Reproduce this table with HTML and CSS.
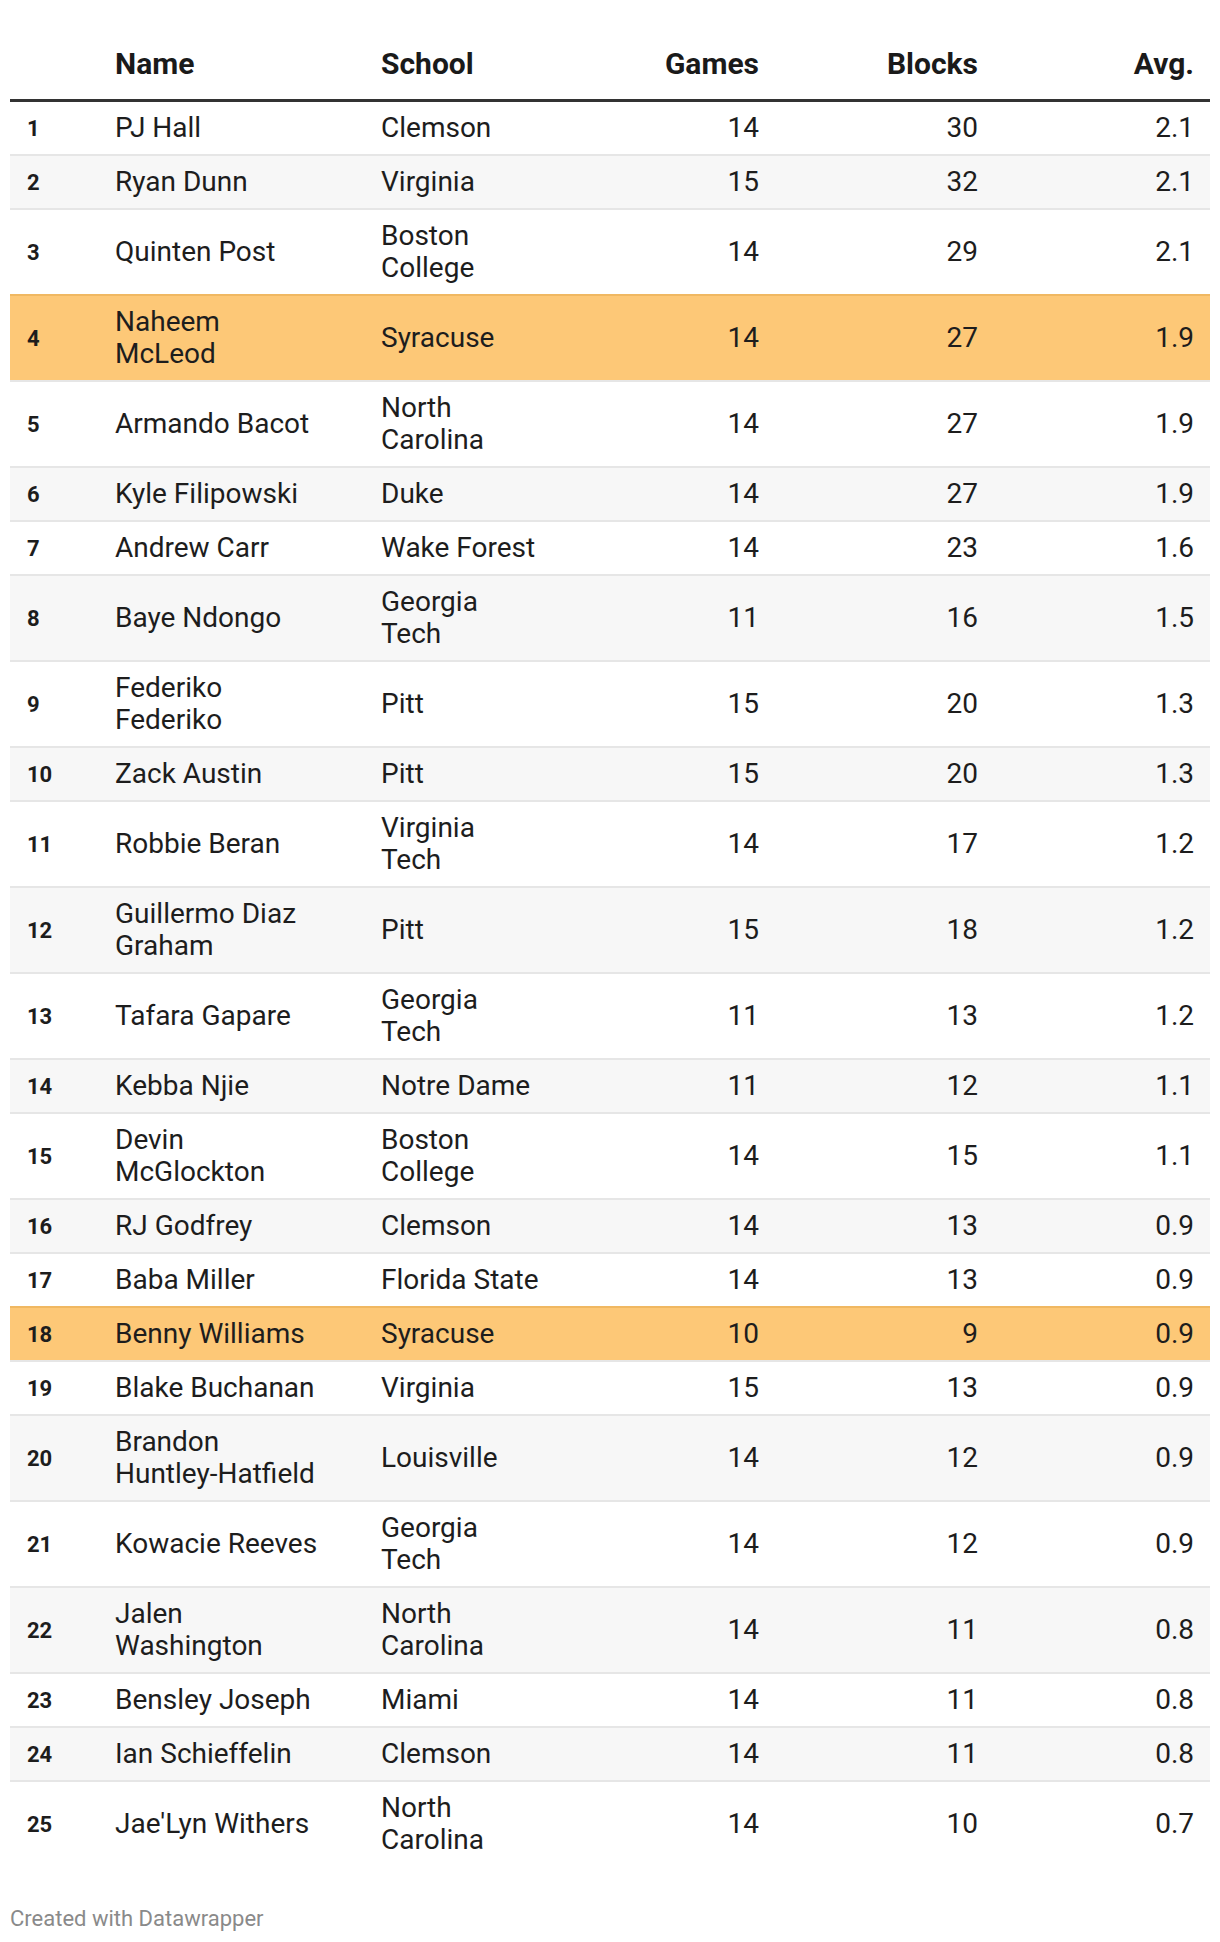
FILE: index.html
```html
<!DOCTYPE html>
<html lang="en">
<head>
<meta charset="utf-8">
<title>ACC Blocks Leaders</title>
<link rel="stylesheet" href="styles.css">
</head>
<body>
<div class="chart">
  <table class="stats">
    <colgroup>
      <col class="c-rank"><col class="c-name"><col class="c-school"><col class="c-games"><col class="c-blocks"><col class="c-avg">
    </colgroup>
    <thead>
      <tr>
        <th class="rank"></th>
        <th>Name</th>
        <th>School</th>
        <th class="num">Games</th>
        <th class="num">Blocks</th>
        <th class="num">Avg.</th>
      </tr>
    </thead>
    <tbody>
      <tr><td class="rank">1</td><td>PJ Hall</td><td>Clemson</td><td class="num">14</td><td class="num">30</td><td class="num">2.1</td></tr>
      <tr><td class="rank">2</td><td>Ryan Dunn</td><td>Virginia</td><td class="num">15</td><td class="num">32</td><td class="num">2.1</td></tr>
      <tr><td class="rank">3</td><td>Quinten Post</td><td>Boston<br>College</td><td class="num">14</td><td class="num">29</td><td class="num">2.1</td></tr>
      <tr class="hl"><td class="rank">4</td><td>Naheem<br>McLeod</td><td>Syracuse</td><td class="num">14</td><td class="num">27</td><td class="num">1.9</td></tr>
      <tr><td class="rank">5</td><td>Armando Bacot</td><td>North<br>Carolina</td><td class="num">14</td><td class="num">27</td><td class="num">1.9</td></tr>
      <tr><td class="rank">6</td><td>Kyle Filipowski</td><td>Duke</td><td class="num">14</td><td class="num">27</td><td class="num">1.9</td></tr>
      <tr><td class="rank">7</td><td>Andrew Carr</td><td>Wake Forest</td><td class="num">14</td><td class="num">23</td><td class="num">1.6</td></tr>
      <tr><td class="rank">8</td><td>Baye Ndongo</td><td>Georgia<br>Tech</td><td class="num">11</td><td class="num">16</td><td class="num">1.5</td></tr>
      <tr><td class="rank">9</td><td>Federiko<br>Federiko</td><td>Pitt</td><td class="num">15</td><td class="num">20</td><td class="num">1.3</td></tr>
      <tr><td class="rank">10</td><td>Zack Austin</td><td>Pitt</td><td class="num">15</td><td class="num">20</td><td class="num">1.3</td></tr>
      <tr><td class="rank">11</td><td>Robbie Beran</td><td>Virginia<br>Tech</td><td class="num">14</td><td class="num">17</td><td class="num">1.2</td></tr>
      <tr><td class="rank">12</td><td>Guillermo Diaz<br>Graham</td><td>Pitt</td><td class="num">15</td><td class="num">18</td><td class="num">1.2</td></tr>
      <tr><td class="rank">13</td><td>Tafara Gapare</td><td>Georgia<br>Tech</td><td class="num">11</td><td class="num">13</td><td class="num">1.2</td></tr>
      <tr><td class="rank">14</td><td>Kebba Njie</td><td>Notre Dame</td><td class="num">11</td><td class="num">12</td><td class="num">1.1</td></tr>
      <tr><td class="rank">15</td><td>Devin<br>McGlockton</td><td>Boston<br>College</td><td class="num">14</td><td class="num">15</td><td class="num">1.1</td></tr>
      <tr><td class="rank">16</td><td>RJ Godfrey</td><td>Clemson</td><td class="num">14</td><td class="num">13</td><td class="num">0.9</td></tr>
      <tr><td class="rank">17</td><td>Baba Miller</td><td>Florida State</td><td class="num">14</td><td class="num">13</td><td class="num">0.9</td></tr>
      <tr class="hl"><td class="rank">18</td><td>Benny Williams</td><td>Syracuse</td><td class="num">10</td><td class="num">9</td><td class="num">0.9</td></tr>
      <tr><td class="rank">19</td><td>Blake Buchanan</td><td>Virginia</td><td class="num">15</td><td class="num">13</td><td class="num">0.9</td></tr>
      <tr><td class="rank">20</td><td>Brandon<br>Huntley-Hatfield</td><td>Louisville</td><td class="num">14</td><td class="num">12</td><td class="num">0.9</td></tr>
      <tr><td class="rank">21</td><td>Kowacie Reeves</td><td>Georgia<br>Tech</td><td class="num">14</td><td class="num">12</td><td class="num">0.9</td></tr>
      <tr><td class="rank">22</td><td>Jalen<br>Washington</td><td>North<br>Carolina</td><td class="num">14</td><td class="num">11</td><td class="num">0.8</td></tr>
      <tr><td class="rank">23</td><td>Bensley Joseph</td><td>Miami</td><td class="num">14</td><td class="num">11</td><td class="num">0.8</td></tr>
      <tr><td class="rank">24</td><td>Ian Schieffelin</td><td>Clemson</td><td class="num">14</td><td class="num">11</td><td class="num">0.8</td></tr>
      <tr><td class="rank">25</td><td>Jae'Lyn Withers</td><td>North<br>Carolina</td><td class="num">14</td><td class="num">10</td><td class="num">0.7</td></tr>
    </tbody>
  </table>
  <div class="footer">Created with Datawrapper</div>
</div>
</body>
</html>
```
FILE: styles.css
```css
* { box-sizing: border-box; }

html, body {
  margin: 0;
  padding: 0;
  background: #ffffff;
}

body {
  font-family: Roboto, "Liberation Sans", Arial, sans-serif;
  color: #1d1d1d;
}

.chart {
  padding: 0 10px;
}

.stats {
  width: 1200px;
  table-layout: fixed;
  border-collapse: separate;
  border-spacing: 0;
}

.c-rank { width: 88px; }
.c-name { width: 266px; }
.c-school { width: 200px; }
.c-games { width: 211px; }
.c-blocks { width: 219px; }
.c-avg { width: 216px; }

.stats th,
.stats td {
  padding: 10px 16px 10px 17px;
  text-align: left;
  white-space: nowrap;
  vertical-align: middle;
  line-height: 32px;
}

.stats th {
  font-size: 30px;
  font-weight: 700;
  color: #1a1a1a;
  padding-top: 48px;
  padding-bottom: 19px;
  vertical-align: bottom;
  border-bottom: 3px solid #333333;
}

.stats td {
  font-size: 28px;
  font-weight: 400;
  border-top: 2px solid #e6e6e6;
}

.stats tbody tr:first-child td {
  border-top: none;
}

.stats tbody tr:nth-child(even) td {
  background: #f7f7f7;
}

.stats tbody tr.hl td {
  background: #fdc877;
  border-top-color: #f0b862;
}

.stats .num {
  text-align: right;
}

.stats td.rank {
  font-size: 22px;
  font-weight: 700;
  padding-top: 11px;
  padding-bottom: 9px;
}

.footer {
  margin-top: 40px;
  font-size: 22px;
  line-height: 26px;
  color: #8a8a8a;
}
```
